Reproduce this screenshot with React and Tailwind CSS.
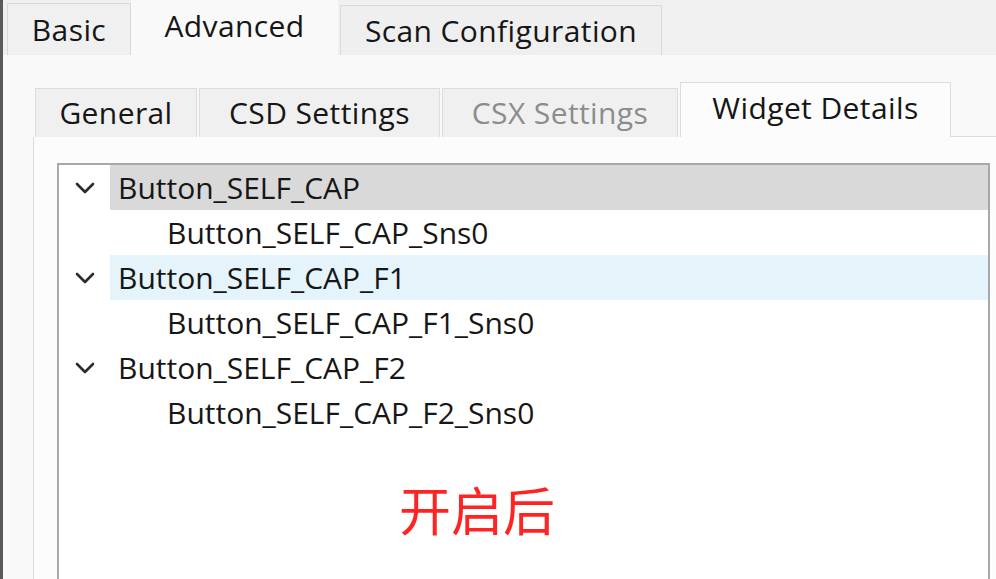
import React from 'react';

const font = { fontFamily: '"Open Sans", "Noto Sans", sans-serif' };

const Chevron = () => (
  <svg width="20" height="12" viewBox="0 0 20 12" fill="none">
    <polyline points="2,2 10,10 18,2" stroke="#2b2b2b" strokeWidth="2.6" strokeLinecap="round" strokeLinejoin="round" />
  </svg>
);

const treeRows = [
  { label: 'Button_SELF_CAP', parent: true, hl: 'bg-[#d9d9d9]' },
  { label: 'Button_SELF_CAP_Sns0' },
  { label: 'Button_SELF_CAP_F1', parent: true, hl: 'bg-[#e5f3fb]' },
  { label: 'Button_SELF_CAP_F1_Sns0' },
  { label: 'Button_SELF_CAP_F2', parent: true },
  { label: 'Button_SELF_CAP_F2_Sns0' },
];

export default function App() {
  return (
    <div className="w-[996px] h-[579px] overflow-hidden bg-[#f0f0f0] border-l-[3px] border-[#5a5a5a] flex flex-col text-[#161616] text-[30px] leading-none" style={font}>
      {/* top tabs */}
      <div className="h-[55px] flex items-end pl-[4px] shrink-0 tracking-[0.4px]">
        <div className="w-[124px] h-[52px] border border-b-0 border-[#dadada] bg-[#f0f0f0] flex items-center justify-center">Basic</div>
        <div className="w-[207px] h-[55px] bg-[#f9f9f9] flex items-center justify-center pb-[3px]">Advanced</div>
        <div className="w-[322px] h-[50px] border border-b-0 border-[#dadada] bg-[#efefef] flex items-center justify-center ml-[2px]">Scan Configuration</div>
      </div>

      <div className="flex-1 bg-[#f9f9f9] pl-[30px] pt-[27px] flex flex-col">
        {/* sub tabs */}
        <div className="h-[55px] flex items-end shrink-0 tracking-[0.4px]">
          <div className="ml-[2px] w-[162px] h-[49px] border border-b-0 border-[#dcdcdc] bg-[#f0f0f0] flex items-center justify-center">General</div>
          <div className="ml-[2px] w-[241px] h-[49px] border border-b-0 border-[#dcdcdc] bg-[#f0f0f0] flex items-center justify-center">CSD Settings</div>
          <div className="ml-[2px] w-[236px] h-[49px] border border-b-0 border-[#dcdcdc] bg-[#f0f0f0] flex items-center justify-center text-[#8c8c8c]">CSX Settings</div>
          <div className="ml-[2px] w-[271px] h-[55px] border border-b-0 border-[#dcdcdc] bg-[#fcfcfc] flex items-center justify-center pb-[4px]">Widget Details</div>
          <div className="flex-1 border-b border-[#dcdcdc]" />
        </div>

        {/* content panel */}
        <div className="flex-1 bg-[#fcfcfc] border-l border-[#dcdcdc] pl-[23px] pt-[26px] pr-[6px] flex flex-col">
          <div className="flex-1 bg-white border-2 border-[#a8a8a8] border-b-0 flex flex-col">
            {treeRows.map((r) => (
              <div key={r.label} className="h-[45px] flex items-stretch shrink-0">
                <div className="w-[51px] flex items-center pl-[16px]">
                  {r.parent && <Chevron />}
                </div>
                <div className={`flex-1 flex items-center ${r.parent ? 'pl-[8px]' : 'pl-[57px]'} ${r.hl || ''}`}>
                  {r.label}
                </div>
              </div>
            ))}
            <div className="mt-[48px] ml-[340px] text-[52px] leading-none text-[#ff2424]" style={{ fontFamily: '"Noto Sans CJK SC", sans-serif' }}>
              开启后
            </div>
          </div>
        </div>
      </div>
    </div>
  );
}
